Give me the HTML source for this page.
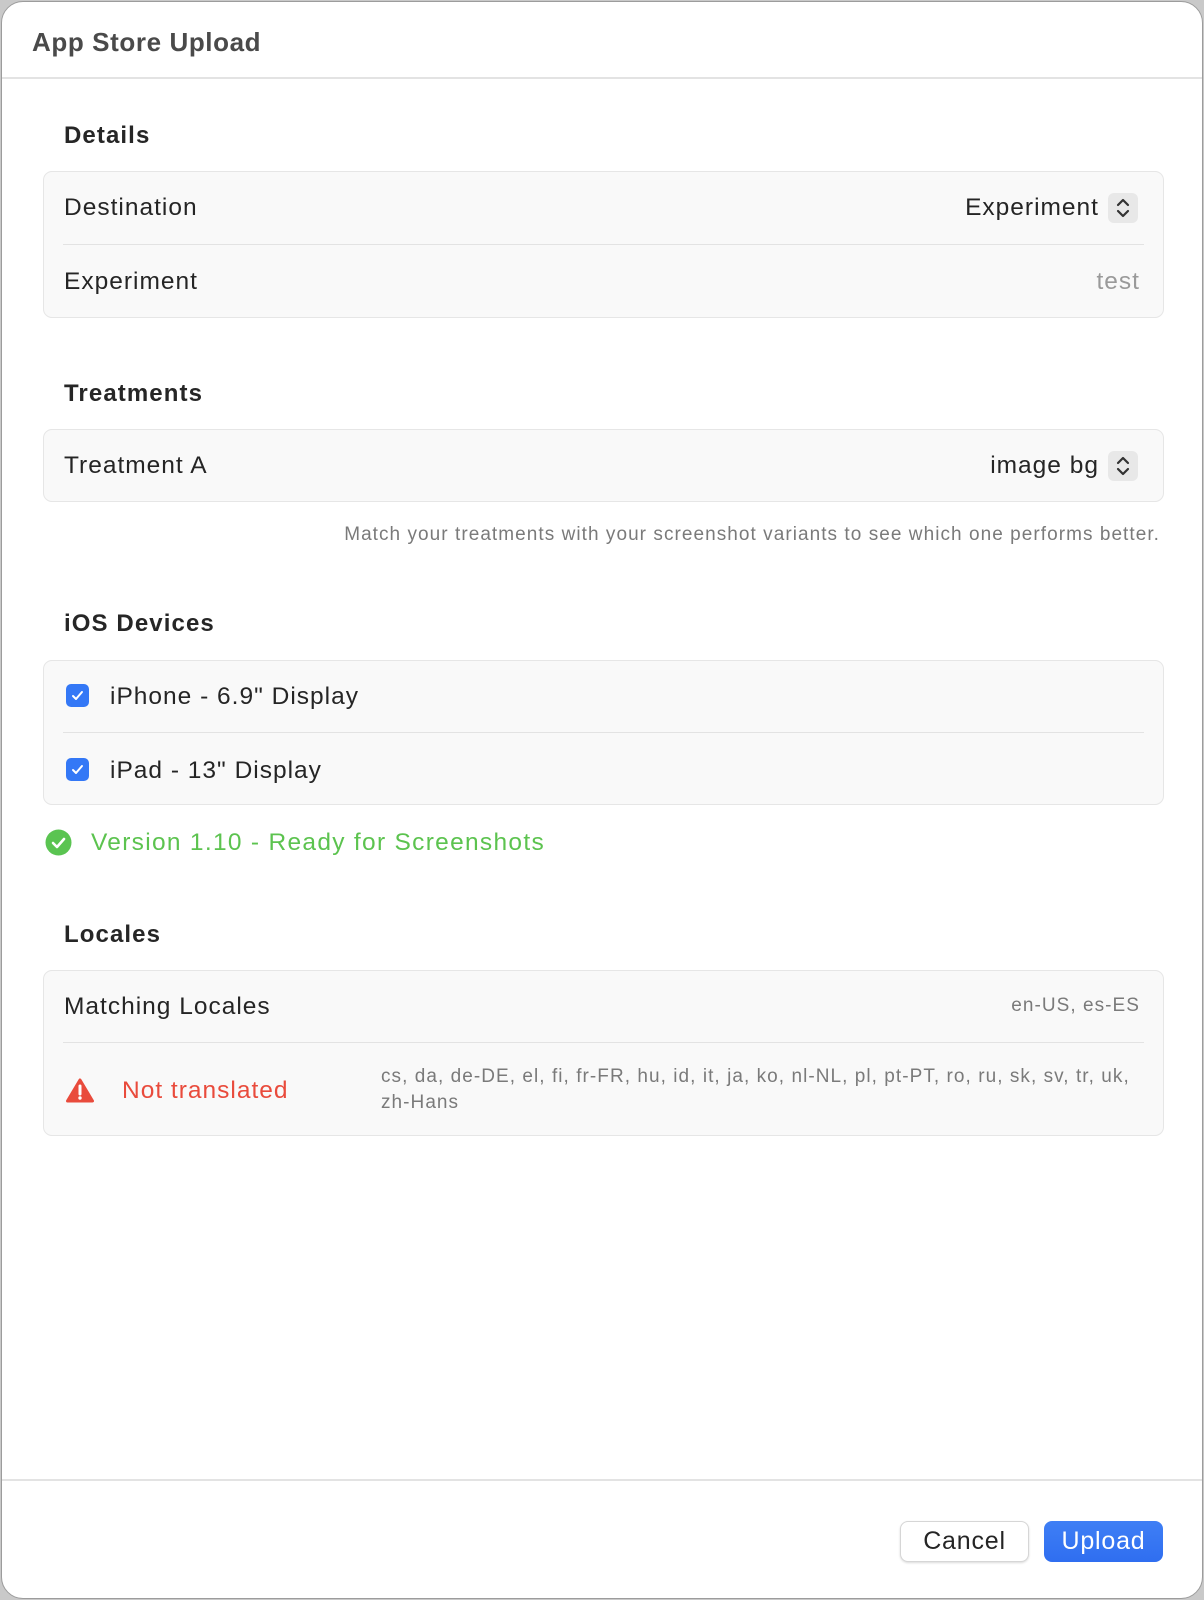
<!DOCTYPE html>
<html><head><meta charset="utf-8"><style>
*{margin:0;padding:0;box-sizing:border-box}
html,body{width:1204px;height:1600px;background:#c9c9c9;overflow:hidden;font-family:"Liberation Sans",sans-serif;color:#252525}
.win{position:absolute;left:1px;top:1px;width:1202px;height:1598px;background:#fff;border:1px solid #9c9c9c;border-radius:22px;overflow:hidden}
.a{position:absolute;white-space:nowrap;line-height:30px}
.h{font-weight:bold;font-size:24px;color:#262626;letter-spacing:1.1px}
.t{font-size:24.5px;letter-spacing:1px}
.s{font-size:19px;color:#7a7a7a;letter-spacing:1.05px}
.box{position:absolute;left:41px;width:1121px;background:#f9f9f9;border:1px solid #e6e6e6;border-radius:9px}
.div{position:absolute;left:61px;width:1081px;height:1px;background:#e3e3e3}
.pop{position:absolute;width:30px;height:30px;background:#e8e8e8;border-radius:6px}
.cb{position:absolute;left:64px;width:23px;height:23px;background:#3478f6;border-radius:5px}
</style></head><body>
<div class="win">
<div class="a" style="left:30px;top:25px;font-size:26px;font-weight:bold;color:#4a4a4a;letter-spacing:0.6px">App Store Upload</div>
<div style="position:absolute;left:0;top:75px;width:1202px;height:2px;background:#e3e3e3"></div>

<div class="a h" style="left:62px;top:119px">Details</div>
<div class="box" style="top:169px;height:147px"></div>
<div class="a t" style="left:62px;top:191px">Destination</div>
<div class="a t" style="right:103px;top:191px">Experiment</div>
<div class="pop" style="left:1106px;top:191px"><svg width="30" height="30" viewBox="0 0 30 30"><path d="M10 12l5-5 5 5M10 18l5 5 5-5" fill="none" stroke="#333" stroke-width="2.2" stroke-linecap="round" stroke-linejoin="round"/></svg></div>
<div class="div" style="top:242px"></div>
<div class="a t" style="left:62px;top:265px">Experiment</div>
<div class="a t" style="right:62px;top:265px;color:#9a9a9a">test</div>

<div class="a h" style="left:62px;top:377px">Treatments</div>
<div class="box" style="top:427px;height:73px"></div>
<div class="a t" style="left:62px;top:449px">Treatment A</div>
<div class="a t" style="right:103px;top:449px">image bg</div>
<div class="pop" style="left:1106px;top:449px"><svg width="30" height="30" viewBox="0 0 30 30"><path d="M10 12l5-5 5 5M10 18l5 5 5-5" fill="none" stroke="#333" stroke-width="2.2" stroke-linecap="round" stroke-linejoin="round"/></svg></div>
<div class="a s" style="right:42px;top:518px">Match your treatments with your screenshot variants to see which one performs better.</div>

<div class="a h" style="left:62px;top:607px">iOS Devices</div>
<div class="box" style="top:658px;height:145px"></div>
<div class="cb" style="top:682px"><svg width="23" height="23" viewBox="0 0 23 23"><path d="M7 12l3 3 6-7" fill="none" stroke="#fff" stroke-width="2" stroke-linecap="round" stroke-linejoin="round"/></svg></div>
<div class="a t" style="left:108px;top:680px">iPhone - 6.9" Display</div>
<div class="div" style="top:730px"></div>
<div class="cb" style="top:756px"><svg width="23" height="23" viewBox="0 0 23 23"><path d="M7 12l3 3 6-7" fill="none" stroke="#fff" stroke-width="2" stroke-linecap="round" stroke-linejoin="round"/></svg></div>
<div class="a t" style="left:108px;top:754px">iPad - 13" Display</div>

<svg style="position:absolute;left:43px;top:827px" width="27" height="27" viewBox="0 0 27 27"><circle cx="13.5" cy="13.5" r="13" fill="#5ac451"/><path d="M8 14l4 4 7-8" fill="none" stroke="#fff" stroke-width="2.6" stroke-linecap="round" stroke-linejoin="round"/></svg>
<div class="a t" style="left:89px;top:826px;color:#5cc34f;letter-spacing:1.3px">Version 1.10 - Ready for Screenshots</div>

<div class="a h" style="left:62px;top:918px">Locales</div>
<div class="box" style="top:968px;height:166px"></div>
<div class="a t" style="left:62px;top:990px">Matching Locales</div>
<div class="a s" style="right:62px;top:989px">en-US, es-ES</div>
<div class="div" style="top:1040px"></div>
<svg style="position:absolute;left:64px;top:1076px" width="28" height="25" viewBox="0 0 28 25"><path d="M14 2L26.5 23H1.5Z" fill="#e94b3c" stroke="#e94b3c" stroke-width="3" stroke-linejoin="round"/><path d="M14 8v8" stroke="#fff" stroke-width="3" stroke-linecap="round"/><circle cx="14" cy="20" r="1.7" fill="#fff"/></svg>
<div class="a t" style="left:120px;top:1074px;color:#e94b3c">Not translated</div>
<div class="a s" style="left:379px;top:1062px;line-height:26px;white-space:normal;width:765px">cs, da, de-DE, el, fi, fr-FR, hu, id, it, ja, ko, nl-NL, pl, pt-PT, ro, ru, sk, sv, tr, uk, zh-Hans</div>

<div style="position:absolute;left:0;top:1477px;width:1202px;height:2px;background:#e3e3e3"></div>
<div class="a" style="left:898px;top:1519px;width:129px;height:41px;border:1px solid #d6d6d6;border-radius:8px;background:#fff;box-shadow:0 1px 2px rgba(0,0,0,.15);text-align:center;line-height:39px;font-size:25px;letter-spacing:0.8px">Cancel</div>
<div class="a" style="left:1042px;top:1519px;width:119px;height:41px;border-radius:8px;background:linear-gradient(#3f7ff5,#2f6ef0);color:#fff;text-align:center;line-height:41px;font-size:25px;letter-spacing:0.8px">Upload</div>
</div>
</body></html>
